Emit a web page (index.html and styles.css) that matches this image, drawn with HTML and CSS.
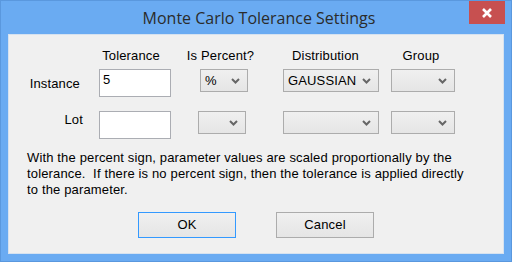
FILE: index.html
```html
<!DOCTYPE html>
<html lang="en">
<head>
    <meta charset="UTF-8">
    <title>Monte Carlo Tolerance Settings</title>
    <link rel="stylesheet" href="styles.css">
</head>
<body>
    <div class="window">
        <div class="titlebar">
            <div class="title">Monte Carlo Tolerance Settings</div>
            <div class="close">
                <svg width="12" height="10" viewBox="0 0 12 10"><path d="M2 1 L10 9 M10 1 L2 9" stroke="#fff" stroke-width="2.6"/></svg>
            </div>
        </div>
        <div class="client">
            <div class="form">
                <div class="head"></div>
                <div class="head h-tol">Tolerance</div>
                <div class="head h-pct">Is Percent?</div>
                <div class="head h-dist">Distribution</div>
                <div class="head h-grp">Group</div>

                <div class="label l-inst">Instance</div>
                <div class="input">5</div>
                <div class="select">%<svg class="chev" width="9" height="6" viewBox="0 0 9 6"><path d="M1 1 L4.5 4.5 L8 1" fill="none" stroke="#666" stroke-width="2"/></svg></div>
                <div class="select">GAUSSIAN<svg class="chev" width="9" height="6" viewBox="0 0 9 6"><path d="M1 1 L4.5 4.5 L8 1" fill="none" stroke="#666" stroke-width="2"/></svg></div>
                <div class="select"><svg class="chev" width="9" height="6" viewBox="0 0 9 6"><path d="M1 1 L4.5 4.5 L8 1" fill="none" stroke="#666" stroke-width="2"/></svg></div>

                <div class="label l-lot">Lot</div>
                <div class="input"></div>
                <div class="select s-lot-pct"><svg class="chev" width="9" height="6" viewBox="0 0 9 6"><path d="M1 1 L4.5 4.5 L8 1" fill="none" stroke="#666" stroke-width="2"/></svg></div>
                <div class="select"><svg class="chev" width="9" height="6" viewBox="0 0 9 6"><path d="M1 1 L4.5 4.5 L8 1" fill="none" stroke="#666" stroke-width="2"/></svg></div>
                <div class="select"><svg class="chev" width="9" height="6" viewBox="0 0 9 6"><path d="M1 1 L4.5 4.5 L8 1" fill="none" stroke="#666" stroke-width="2"/></svg></div>
            </div>
            <p class="note">With the percent sign, parameter values are scaled proportionally by the<br>tolerance.&nbsp; If there is no percent sign, then the tolerance is applied directly<br>to the parameter.</p>
            <div class="buttons">
                <div class="btn default">OK</div>
                <div class="btn">Cancel</div>
            </div>
        </div>
    </div>
</body>
</html>
```

FILE: styles.css
```css
body {
    margin: 0;
    padding: 0;
    font-family: 'Liberation Sans', Arial, sans-serif;
    font-size: 13px;
    letter-spacing: 0.15px;
    color: #000;
}
.window {
    width: 512px;
    height: 262px;
    box-sizing: border-box;
    background: #6aabf2;
    border: 1px solid #5a98de;
    display: flex;
    flex-direction: column;
}
.titlebar {
    height: 33px;
    display: flex;
    padding-left: 48px;
    padding-right: 6px;
}
.title {
    flex: 1;
    text-align: center;
    font-family: 'Open Sans', 'Noto Sans', sans-serif;
    font-size: 16px;
    letter-spacing: 0;
    color: #2b2b2b;
    line-height: 34px;
}
.close {
    width: 36px;
    height: 23px;
    background: #c75050;
    display: flex;
    align-items: center;
    justify-content: center;
}
.client {
    flex: 1;
    margin: 0 7px 7px 7px;
    background: #f0f0f0;
    border: 1px solid #d6e2f0;
}
.form {
    display: grid;
    grid-template-columns: 90px 72px 29px 48px 35px 96px 12px 64px;
    grid-template-rows: 15px 28px 28px;
    row-gap: 6px;
    padding-top: 13px;
}
.form > :nth-child(5n+2) { grid-column: 2; }
.form > :nth-child(5n+3) { grid-column: 4; }
.form > :nth-child(5n+4) { grid-column: 6; }
.form > :nth-child(5n+5) { grid-column: 8; }
.form > :nth-child(n+11) { margin-top: 8px; }
.head {
    line-height: 15px;
    text-align: center;
    white-space: nowrap;
    margin: 0 -20px;
}
.h-tol { padding-right: 8px; }
.h-pct { padding-right: 7px; }
.h-dist { padding-right: 11px; }
.h-grp { padding-right: 4px; }
.label {
    text-align: right;
    line-height: 15px;
}
.l-inst {
    margin-top: 7px;
    padding-right: 19px;
}
.l-lot {
    padding-right: 16px;
}
.form > .l-lot { margin-top: 9px; }
.input {
    background: #fff;
    border: 1px solid #abadb3;
    height: 28px;
    box-sizing: border-box;
    padding: 2px 3px;
    line-height: 15px;
}
.select {
    height: 23px;
    box-sizing: border-box;
    border: 1px solid #acacac;
    background: linear-gradient(#f0f0f0, #e5e5e5);
    position: relative;
    padding: 0 2px 0 4px;
    line-height: 21px;
}
.s-lot-pct {
    margin-left: -2px;
    margin-right: 2px;
}
.chev {
    position: absolute;
    right: 7px;
    top: 8px;
}
.note {
    margin: 19px 0 0 18px;
    line-height: 16px;
}
.buttons {
    display: flex;
    justify-content: center;
    gap: 40px;
    margin-top: 14px;
}
.btn {
    width: 98px;
    height: 26px;
    box-sizing: border-box;
    border: 1px solid #acacac;
    background: linear-gradient(#f0f0f0, #e5e5e5);
    text-align: center;
    line-height: 24px;
}
.btn.default {
    border-color: #3399ff;
}
```
